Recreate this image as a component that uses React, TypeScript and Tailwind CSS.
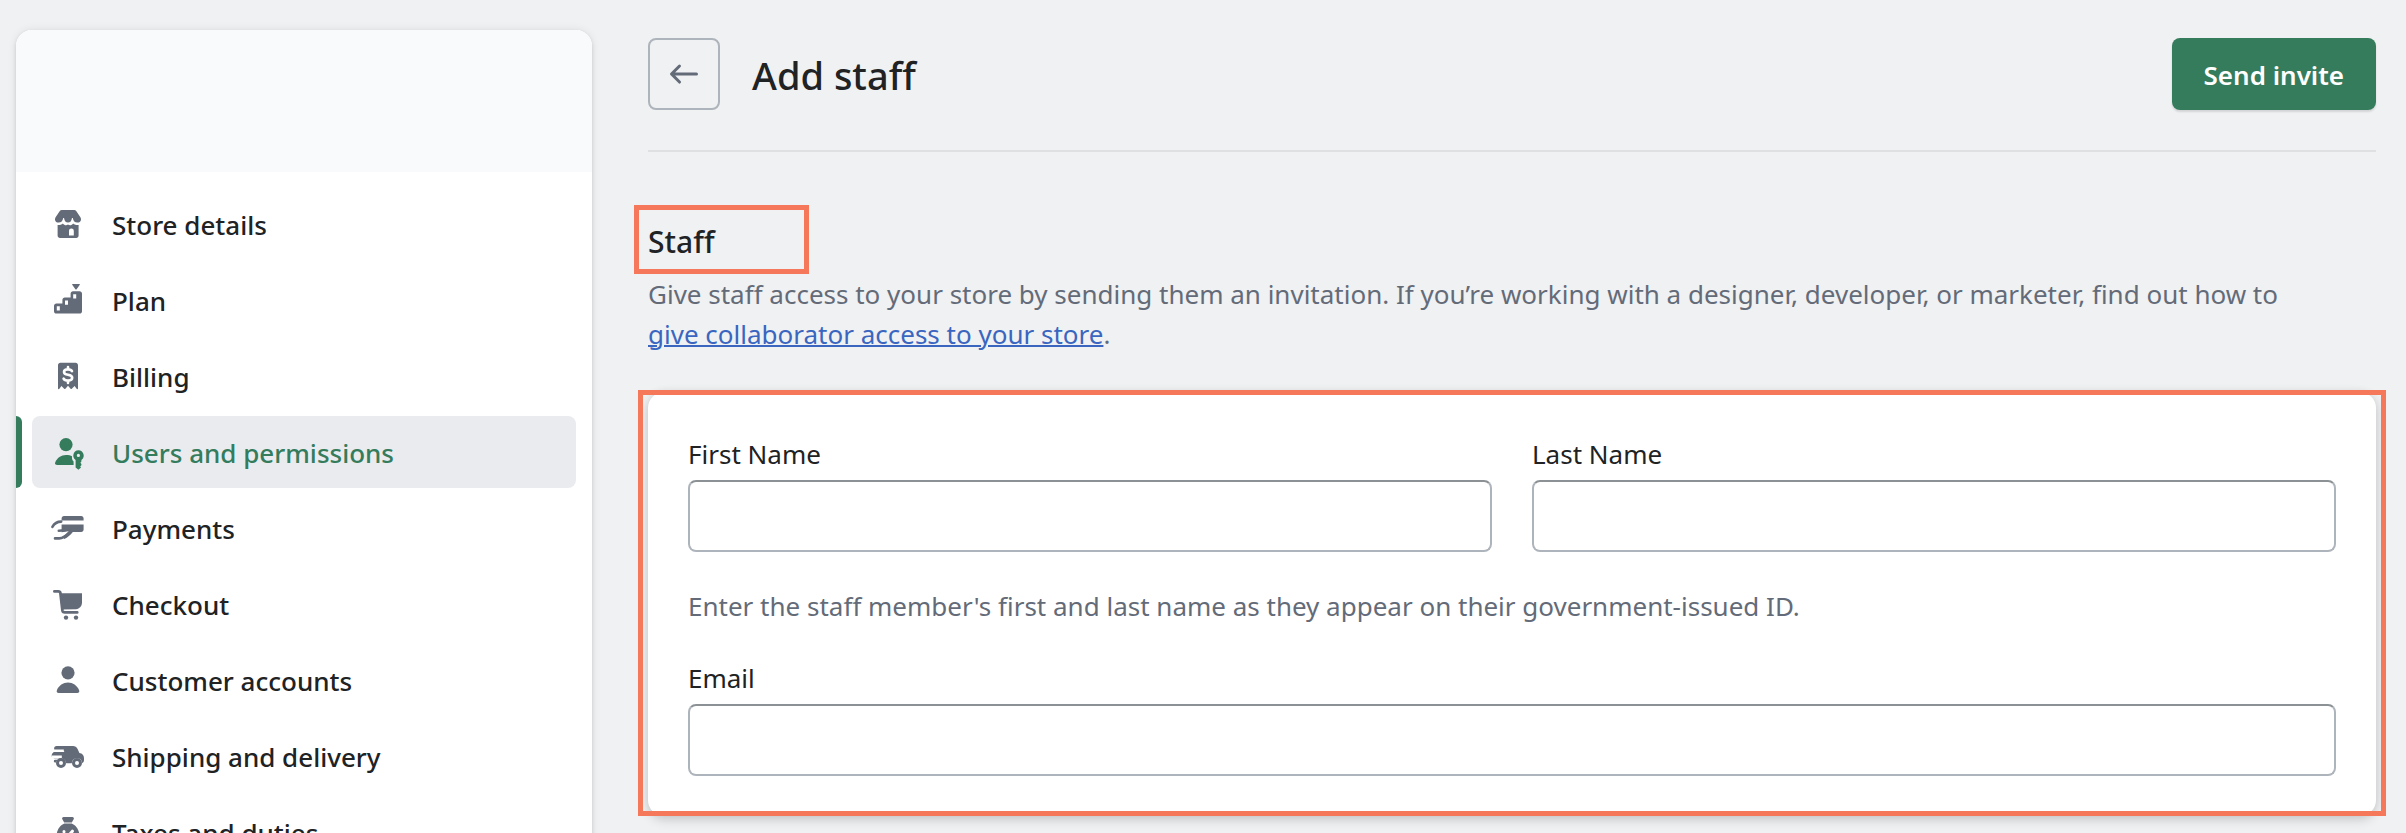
import type { ReactNode } from 'react'

type NavItem = {
  label: string
  icon: ReactNode
  active?: boolean
}

const navItems: NavItem[] = [
  {
    label: 'Store details',
    icon: (
      <>
        <path d="M6.900 3h6.200a1.200 1.200 0 0 1 1 .5l2.100 3.100c.2.300.3.700.3 1.100 0 .9-.7 1.600-1.800 1.600-1.400 0-2-.8-2.300-2.300h-.4c-.3 1.500-.8 2.300-2 2.300s-1.700-.8-2-2.300h-.4c-.3 1.500-.9 2.300-2.300 2.300-1.100 0-1.800-.7-1.800-1.600 0-.4.1-.8.3-1.100l2.100-3.100a1.200 1.200 0 0 1 1-.5z" />
        <path
          fillRule="evenodd"
          d="M4.800 10.500c1.100.2 2-.1 2.600-.7.800 1 1.900 1.100 2.600.5.700.6 1.900.5 2.600-.5.6.6 1.600.9 2.700.7v5.300c0 .7-.5 1.200-1.200 1.200h-8.100c-.7 0-1.200-.5-1.200-1.200zm5.700 5.200h2.400v-2.300a1.200 1.200 0 0 0-2.400 0z"
        />
      </>
    ),
  },
  {
    label: 'Plan',
    icon: (
      <>
        <path d="M12.400 2h3.200c.3 0 .4.200.3.400l-1.600 2.200c-.2.200-.4.200-.6 0l-1.600-2.200c-.1-.2 0-.4.300-.4z" />
        <path
          fillRule="evenodd"
          d="M12.500 5.600h3.300c.7 0 1.200.5 1.200 1.200v8.800c0 .7-.5 1.200-1.200 1.200h-11.600c-.7 0-1.200-.5-1.200-1.200v-2.700c0-.7.5-1.200 1.200-1.200h3v-1.800c0-.7.5-1.200 1.200-1.200h2.900v-1.900c0-.7.5-1.200 1.200-1.200zm.1 1.500v2.200h1.500v-2.200zm-4.100 3.100v2.200h1.500v-2.200zm-4.100 2.900v2.200h1.500v-2.200z"
        />
      </>
    ),
  },
  {
    label: 'Billing',
    icon: (
      <>
        <path d="M6.200 3.400h7.600c.7 0 1.200.5 1.200 1.200v11.600c0 .4-.4.500-.7.200l-1-1.400-1.400 1.400c-.2.200-.4.200-.6 0l-1.300-1.500-1.300 1.500c-.2.200-.4.200-.6 0l-1.400-1.400-1 1.400c-.3.300-.7.200-.7-.2v-11.600c0-.7.5-1.200 1.200-1.200z" />
        <path
          d="M12 7.600c-.3-.6-.9-.9-2-.9-1.200 0-2 .5-2 1.300 0 .9.800 1.200 2 1.400s2.100.6 2.100 1.500-.9 1.400-2.100 1.400-1.900-.4-2.200-1M10 5.500v1.200M10 12.400v1.100"
          fill="none"
          stroke="white"
          strokeWidth="1.300"
          strokeLinecap="round"
        />
      </>
    ),
  },
  {
    label: 'Users and permissions',
    active: true,
    icon: (
      <>
        <circle cx="9" cy="6.300" r="3.300" />
        <path d="M9 11.500c1.300 0 2.400.3 3 .6-.1 1.200.1 2 .8 2.700v1.700h-8.100c-1 0-1.400-.7-1.100-1.300.9-2.200 3-3.700 5.400-3.700z" />
        <path
          fillRule="evenodd"
          d="M15.200 9.100a2.700 2.700 0 0 1 1.500 4.900v.8l-.5.600.5.600v.6l-.6.500.4.600-1.300 1.200-1.400-1.200v-3.700a2.700 2.700 0 0 1 1.400-4.900zm0 1.800a.8.8 0 1 0 0 1.600.8.8 0 0 0 0-1.600z"
        />
      </>
    ),
  },
  {
    label: 'Payments',
    icon: (
      <>
        <path d="M8 4h8.600c.7 0 1.200.5 1.200 1.200v1.100h-11v-1.100c0-.7.5-1.200 1.200-1.200z" />
        <path d="M6.800 8.200h11v2.600c0 .7-.5 1.200-1.200 1.200h-4.200c-1.200 1.500-2.600 2.800-4.200 3.500l-.8-1 3-2.900-3.600.5z" />
        <path
          d="M2.200 9.400c1-1.800 2.100-2.600 4.400-2.600M5.400 11.400c2.200 0 3.800-.4 5.400-1M3.500 15.200h2.100c2.800 0 4.400-2.200 6.600-4.200"
          fill="none"
          stroke="currentColor"
          strokeWidth="1.300"
          strokeLinecap="round"
        />
      </>
    ),
  },
  {
    label: 'Checkout',
    icon: (
      <>
        <path
          d="M3.200 3.700h2c.5 0 .9.300 1 .8l1 8.700c.1.700.5 1 1.200 1h6.200"
          fill="none"
          stroke="currentColor"
          strokeWidth="1.400"
          strokeLinecap="round"
        />
        <path d="M6 4.600h11v4.700c0 1.800-1.200 3.200-3 3.300l-7 .2z" />
        <circle cx="9" cy="16.800" r="1.100" />
        <circle cx="14" cy="16.800" r="1.100" />
      </>
    ),
  },
  {
    label: 'Customer accounts',
    icon: (
      <>
        <circle cx="10" cy="6.400" r="3.300" />
        <path d="M10 11.300c2.400 0 4.600 1.500 5.500 3.700.4.800.1 1.500-.9 1.500h-9.200c-1 0-1.300-.7-.9-1.500.9-2.200 3.100-3.700 5.500-3.700z" />
      </>
    ),
  },
  {
    label: 'Shipping and delivery',
    icon: (
      <>
        <path d="M4.700 5h7.800c1 0 1.900.6 2.300 1.500l.9 2c1.500.2 2.300 1.200 2.300 2.600v.8c0 .9-.3 1.400-.9 1.700a2.600 2.600 0 0 0-5.200 0h-2.800a2.600 2.600 0 0 0-5.100-.3h-.4a.7.700 0 0 1 0-1.400h3.500c.5 0 .5-.8 0-.8h-3.900a.7.700 0 0 1 0-2.700h4.500c.6 0 .6-.9 0-.9h-3.400a.7.700 0 0 1 0-2.500z" />
        <path d="M2 6.700h5.900v1.200h-5.900zM2 9.700h4.900v1.300h-4.900z" fill="white" />
        <path d="M3.100 8h5.400v1.500h-5.400a.7.700 0 0 1 0-1.500z" />
        <path
          fillRule="evenodd"
          d="M6.500 11a2.500 2.500 0 1 1 0 5 2.500 2.500 0 0 1 0-5zm0 1.500a1 1 0 1 0 0 2 1 1 0 0 0 0-2zM14.500 11a2.500 2.500 0 1 1 0 5 2.500 2.500 0 0 1 0-5zm0 1.500a1 1 0 1 0 0 2 1 1 0 0 0 0-2z"
        />
      </>
    ),
  },
  {
    label: 'Taxes and duties',
    icon: (
      <>
        <path d="M7.800 2.500h4.400c.6 0 .9.500.7 1l-1 1.700h-3.800l-1-1.700c-.2-.5.100-1 .7-1z" />
        <path d="M8.200 5.700h3.600c2.400.9 3.900 3.400 3.900 6.300 0 3.200-2.200 5-5.700 5s-5.700-1.800-5.700-5c0-2.900 1.500-5.400 3.900-6.300z" />
        <path
          d="M12.200 9.600l-4.300 5M8 9.800v.1M12 14.200v.1"
          fill="none"
          stroke="white"
          strokeWidth="1.500"
          strokeLinecap="round"
        />
      </>
    ),
  },
]

function Icon({ children }: { children: ReactNode }) {
  return (
    <svg viewBox="0 0 20 20" className="w-10 h-10 shrink-0" fill="currentColor" aria-hidden="true">
      {children}
    </svg>
  )
}

function Field({ id, label, type = 'text' }: { id: string; label: string; type?: string }) {
  return (
    <div className="flex-1">
      <label htmlFor={id} className="block mb-1.5 pt-0.5 leading-10">
        {label}
      </label>
      <input
        id={id}
        type={type}
        className="block w-full h-[72px] px-6 bg-white rounded-lg border-2 border-[#aeb4bb] border-t-[#8c9196]"
      />
    </div>
  )
}

export default function App() {
  return (
    <div className="flex h-screen overflow-hidden gap-14 pl-4 pr-[30px] bg-[#f0f1f3] text-[26px] text-[#202223] font-['Noto_Sans',sans-serif]">
      {/* Sidebar */}
      <aside className="w-[576px] shrink-0 self-start mt-[30px] rounded-2xl overflow-hidden bg-white shadow-[0_0_10px_rgba(23,24,24,0.08),0_2px_4px_rgba(0,0,0,0.12)]">
        <div className="h-[142px] bg-[#f9fafc]" />
        <nav className="flex flex-col gap-1 py-4">
          {navItems.map((item) => (
            <div key={item.label} className="flex gap-2.5 pr-4">
              <span className={`w-1.5 rounded-r-md ${item.active ? 'bg-[#347c5c]' : ''}`} />
              <a
                href="#"
                aria-current={item.active ? 'page' : undefined}
                className={`flex flex-1 items-center gap-6 h-[72px] px-4 rounded-lg leading-10 font-medium ${
                  item.active ? 'bg-[#eaebef] text-[#347c5c]' : ''
                }`}
              >
                <span className={item.active ? 'text-[#347c5c]' : 'text-[#646b78]'}>
                  <Icon>{item.icon}</Icon>
                </span>
                <span className="pt-0.5">{item.label}</span>
              </a>
            </div>
          ))}
        </nav>
      </aside>

      {/* Content */}
      <main className="flex-1 min-w-0">
        <header className="flex items-center pt-[38px] pb-10 border-b-2 border-[#dfe0e2]">
          <button
            type="button"
            aria-label="Back"
            className="flex items-center justify-center w-[72px] h-[72px] rounded-lg border-2 border-[#aeb4bb] text-[#646b78]"
          >
            <Icon>
              <path d="M17 10a.75.75 0 0 1-.75.75h-10.690l2.720 2.720a.75.75 0 1 1-1.060 1.060l-4-4a.75.75 0 0 1 0-1.060l4-4a.75.75 0 0 1 1.060 1.060l-2.720 2.720h10.690a.75.75 0 0 1 .75.75z" />
            </Icon>
          </button>
          <h1 className="ml-8 pt-0.5 text-[38px] leading-[56px] font-medium">Add staff</h1>
          <button
            type="button"
            className="ml-auto h-[72px] px-8 pt-0.5 rounded-lg bg-[#347c5c] text-white font-semibold shadow-[0_2px_2px_rgba(0,0,0,0.12)]"
          >
            Send invite
          </button>
        </header>

        <section className="pt-16">
          <div className="relative pt-0.5 pb-2">
            <h2 className="text-3xl leading-12 font-medium">Staff</h2>
            <div className="absolute top-[-11px] -left-3.5 w-[175px] h-[69px] border-5 border-[#f47859] pointer-events-none" />
          </div>
          <p className="leading-10 text-[#646b78]">
            Give staff access to your store by sending them an invitation. If you’re working with a designer, developer,
            or marketer, find out how to
            <br />
            <a href="#" className="text-[#3a66c0] underline decoration-2">
              give collaborator access to your store
            </a>
            .
          </p>

          <form className="relative mt-[38px] p-10 rounded-2xl bg-white shadow-[0_0_10px_rgba(23,24,24,0.08),0_4px_12px_rgba(0,0,0,0.14)]">
            <div className="flex gap-10">
              <Field id="first-name" label="First Name" />
              <Field id="last-name" label="Last Name" />
            </div>
            <p className="mt-8 mb-7.5 pt-0.5 leading-10 text-[#646b78]">
              Enter the staff member's first and last name as they appear on their government-issued ID.
            </p>
            <Field id="email" label="Email" type="email" />
            <div className="absolute -inset-x-2.5 -top-0.5 bottom-0 border-5 border-[#f47859] pointer-events-none" />
          </form>
        </section>
      </main>
    </div>
  )
}
